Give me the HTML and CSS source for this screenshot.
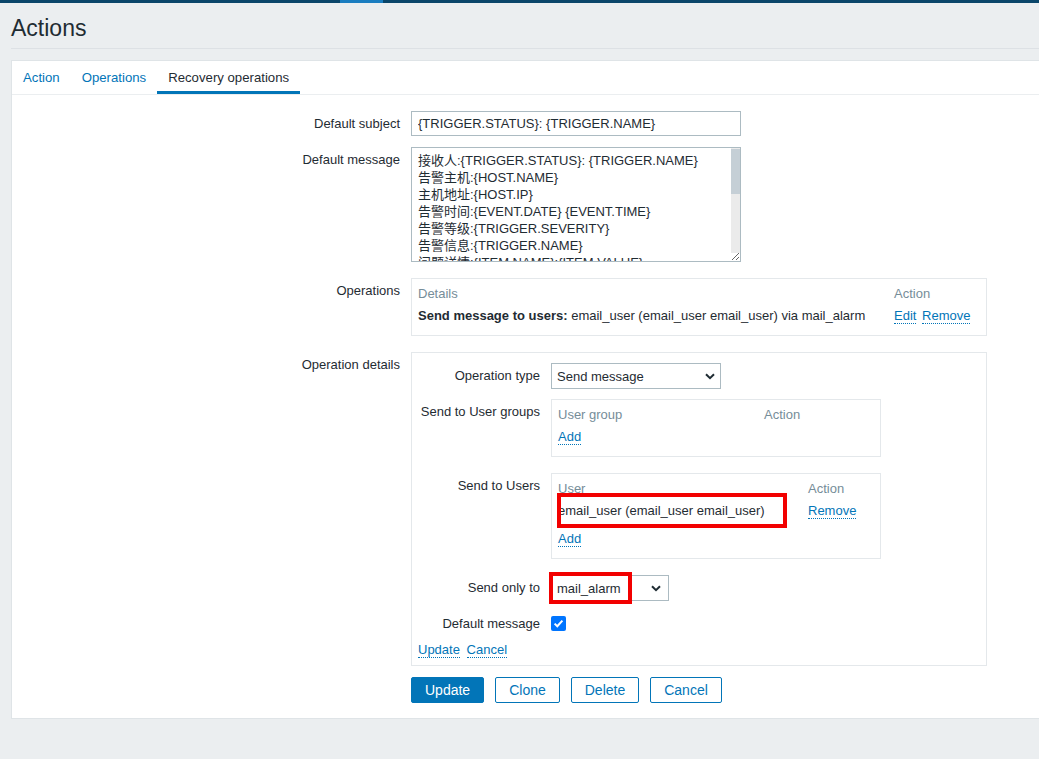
FILE: index.html
```html
<!DOCTYPE html>
<html lang="zh-CN">
<head>
<meta charset="utf-8">
<title>Actions</title>
<link rel="stylesheet" href="styles.css">
</head>
<body>
<div class="topbar"><span class="topbar-active"></span></div>
<header class="page-header"><h1>Actions</h1></header>
<main class="panel">
  <nav class="tabs">
    <a class="tab">Action</a>
    <a class="tab">Operations</a>
    <a class="tab active">Recovery operations</a>
  </nav>
  <div class="form">
    <div class="row row-subject">
      <label class="row-label">Default subject</label>
      <input class="input subject" type="text" value="{TRIGGER.STATUS}: {TRIGGER.NAME}">
    </div>
    <div class="row row-message">
      <label class="row-label">Default message</label>
      <div class="textarea-wrap">
        <textarea class="textarea">接收人:{TRIGGER.STATUS}: {TRIGGER.NAME}
告警主机:{HOST.NAME}
主机地址:{HOST.IP}
告警时间:{EVENT.DATE} {EVENT.TIME}
告警等级:{TRIGGER.SEVERITY}
告警信息:{TRIGGER.NAME}
问题详情:{ITEM.NAME}:{ITEM.VALUE}
当前状态:{TRIGGER.STATUS}:{ITEM.VALUE}
事件ID:{EVENT.ID}
恢复时间:{EVENT.RECOVERY.DATE} {EVENT.RECOVERY.TIME}
持续时间:{EVENT.AGE}
告警项目:{TRIGGER.KEY1}
监控项值:{ITEM.LASTVALUE}
</textarea>
        <span class="scrollbar"><span class="scrollbar-thumb"></span></span>
      </div>
    </div>
    <div class="row row-ops">
      <label class="row-label">Operations</label>
      <div class="box ops-box">
        <div class="box-grid ops-grid">
          <div class="box-head">Details</div>
          <div class="box-head">Action</div>
          <div class="box-cell"><b>Send message to users:</b> email_user (email_user email_user) via mail_alarm</div>
          <div class="box-cell actions"><a class="link">Edit</a> <a class="link">Remove</a></div>
        </div>
      </div>
    </div>
    <div class="row row-details">
      <label class="row-label">Operation details</label>
      <div class="details-box">
        <div class="drow drow-type">
          <label class="row-label">Operation type</label>
          <div class="select select-type"><span>Send message</span><svg class="chev" width="10" height="7" viewBox="0 0 10 7"><path d="M1 1.2 L5 5.2 L9 1.2" fill="none" stroke="#1f2c33" stroke-width="2"/></svg></div>
        </div>
        <div class="drow drow-groups">
          <label class="row-label">Send to User groups</label>
          <div class="box sub-box">
            <div class="box-grid groups-grid">
              <div class="box-head">User group</div>
              <div class="box-head">Action</div>
            </div>
            <div class="box-add"><a class="link">Add</a></div>
          </div>
        </div>
        <div class="drow drow-users">
          <label class="row-label">Send to Users</label>
          <div class="box sub-box users-box">
            <div class="box-grid users-grid">
              <div class="box-head">User</div>
              <div class="box-head">Action</div>
              <div class="box-cell data">email_user (email_user email_user)</div>
              <div class="box-cell data"><a class="link">Remove</a></div>
            </div>
            <div class="box-add"><a class="link">Add</a></div>
            <span class="mark mark-user"></span>
          </div>
        </div>
        <div class="drow drow-only">
          <label class="row-label">Send only to</label>
          <div class="select-wrap">
            <div class="select select-only"><span>mail_alarm</span><svg class="chev" width="10" height="7" viewBox="0 0 10 7"><path d="M1 1.2 L5 5.2 L9 1.2" fill="none" stroke="#1f2c33" stroke-width="2"/></svg></div>
            <span class="mark mark-only"></span>
          </div>
        </div>
        <div class="drow drow-default">
          <label class="row-label">Default message</label>
          <div class="check-field"><span class="checkbox"><svg width="15" height="15" viewBox="0 0 15 15"><path d="M3.6 7.6 L6.3 10.2 L11.4 4.6" fill="none" stroke="#fff" stroke-width="2"/></svg></span></div>
        </div>
        <div class="detail-links"><a class="link">Update</a> <a class="link">Cancel</a></div>
      </div>
    </div>
    <div class="row row-buttons">
      <span></span>
      <div class="buttons">
        <button class="btn btn-primary" type="button">Update</button>
        <button class="btn" type="button">Clone</button>
        <button class="btn" type="button">Delete</button>
        <button class="btn" type="button">Cancel</button>
      </div>
    </div>
  </div>
</main>
</body>
</html>
```
FILE: styles.css
```css
* { box-sizing: border-box; }
html, body { margin: 0; padding: 0; }
body {
  background: #ebeef0;
  font-family: "Liberation Sans", Arial, "Noto Sans CJK SC", sans-serif;
  font-size: 13px;
  color: #1f2c33;
  min-height: 759px;
}
.topbar { height: 3px; background: #0a466a; padding-left: 340px; display: flex; }
.topbar-active { width: 43px; background: #1a7dc0; }

.page-header { margin-left: 11px; padding: 12px 0 7px; border-bottom: 1px solid #dde1e5; }
.page-header h1 { margin: 0; font-size: 23px; line-height: 26px; font-weight: normal; color: #1f2c33; }

.panel {
  margin: 11px 0 0 11px;
  background: #fff;
  border: 1px solid #dfe4e7;
  border-right: 0;
  padding-bottom: 15px;
}
.tabs { display: flex; height: 34px; border-bottom: 1px solid #ebeef0; }
.tab {
  height: 33px;
  padding: 2px 11px 0;
  display: flex;
  align-items: center;
  color: #0275b8;
  border-bottom: 3px solid transparent;
  font-size: 13.2px;
}
.tab.active { color: #1f2c33; border-bottom-color: #0275b8; }

.form { padding-top: 16px; }
.row { display: grid; grid-template-columns: 388px 1fr; column-gap: 11px; align-items: start; }
.row-label { text-align: right; line-height: 25px; white-space: nowrap; }
.row-subject { margin-bottom: 11px; }
.row-message { margin-bottom: 16px; }
.row-ops { margin-bottom: 16px; }
.row-details { margin-bottom: 11px; }

.input {
  width: 330px; height: 25px;
  border: 1px solid #acbbc2;
  padding: 0 6px;
  font: 13px "Liberation Sans", Arial, sans-serif;
  color: #1f2c33;
  outline: none;
}
.textarea-wrap { position: relative; width: 330px; }
.textarea {
  display: block;
  width: 330px; height: 115px;
  border: 1px solid #acbbc2;
  padding: 4px 14px 4px 6px;
  font: 13px/17px "Liberation Sans", Arial, "Noto Sans CJK SC", sans-serif;
  color: #1f2c33;
  resize: both;
  overflow-y: scroll;
  white-space: pre;
  outline: none;
}
.scrollbar {
  position: absolute;
  right: 1px; top: 1px;
  width: 9px; height: 105px;
  background: #ebebeb;
  padding-top: 1px;
  pointer-events: none;
}
.scrollbar-thumb { display: block; height: 45px; background: #c5cfd6; }

.box { border: 1px solid #e4e8eb; padding: 4px 6px 7px; }
.ops-box { width: 576px; }
.box-grid { display: grid; }
.ops-grid { grid-template-columns: 476px 1fr; }
.groups-grid { grid-template-columns: 206px 1fr; }
.users-grid { grid-template-columns: 250px 1fr; }
.box-head { color: #768d99; line-height: 21px; }
.box-cell { line-height: 24px; white-space: nowrap; }
.box-cell b { font-weight: bold; }
.box-cell.data { margin-bottom: 4px; }
.actions .link + .link { margin-left: 2px; }
.box-add { line-height: 24px; }

.link { color: #0275b8; text-decoration: none; border-bottom: 1px dotted #0275b8; cursor: pointer; }

.details-box { width: 576px; border: 1px solid #e4e8eb; padding: 10px 6px 5px; }
.drow { display: grid; grid-template-columns: 122px 1fr; column-gap: 11px; align-items: start; }
.drow-type { margin-bottom: 10px; }
.drow-groups { margin-bottom: 16px; }
.drow-users { margin-bottom: 16px; }
.drow-only { margin-bottom: 10px; }
.drow-default { margin-bottom: 4px; }
.sub-box { width: 330px; }
.users-box { position: relative; }

.select {
  height: 26px;
  border: 1px solid #acbbc2;
  display: flex;
  align-items: center;
  justify-content: space-between;
  padding: 0 5px 0 5px;
  background: #fff;
}
.select-type { width: 170px; }
.select-only { width: 118px; padding-right: 7px; }
.chev { display: block; }
.select-wrap { position: relative; width: 118px; }

.mark { position: absolute; border: 4px solid #f20000; pointer-events: none; }
.mark-user { left: 5px; top: 19px; width: 230px; height: 35px; }
.mark-only { left: -2px; top: -3px; width: 83px; height: 32px; }

.check-field { height: 25px; display: flex; align-items: center; }
.checkbox {
  width: 15px; height: 15px;
  border-radius: 2px;
  background: #0075ff;
  display: block;
}
.checkbox svg { display: block; }

.detail-links { line-height: 20px; }
.detail-links .link + .link { margin-left: 3px; }

.buttons { display: flex; gap: 11px; }
.btn {
  height: 26px;
  padding: 0 13px;
  font: 14px "Liberation Sans", Arial, sans-serif;
  border: 1px solid #0275b8;
  border-radius: 2px;
  background: #fff;
  color: #0275b8;
  cursor: pointer;
}
.btn-primary { background: #0275b8; color: #fff; }
```
